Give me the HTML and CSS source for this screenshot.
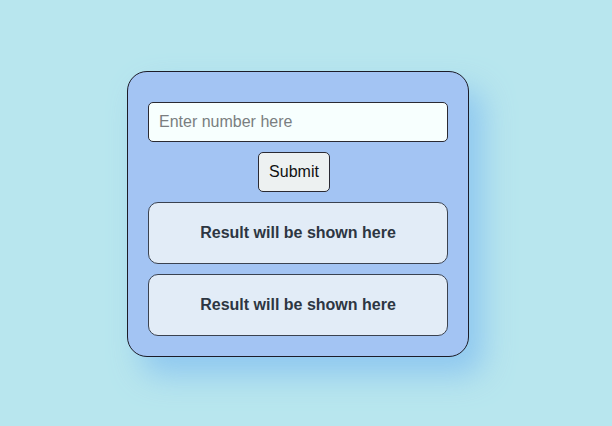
FILE: index.html
```html
<!DOCTYPE html>
<html>
<head>
<meta charset="utf-8">
<link rel="stylesheet" href="styles.css">
</head>
<body>
<div class="page">
  <div class="card">
    <input class="num-input" type="text" placeholder="Enter number here">
    <button class="submit-btn">Submit</button>
    <div class="result">Result will be shown here</div>
    <div class="result">Result will be shown here</div>
  </div>
</div>
</body>
</html>
```
FILE: styles.css
```css
html, body {
  margin: 0;
  padding: 0;
  background: #b8e6ee;
  font-family: "Liberation Sans", Arial, sans-serif;
}
.page {
  height: 426px;
  display: flex;
  justify-content: center;
  align-items: center;
  padding-right: 16px;
  padding-top: 2px;
  box-sizing: border-box;
}
.card {
  width: 342px;
  box-sizing: border-box;
  background: #a3c4f3;
  border: 1px solid #1c1c28;
  border-radius: 20px;
  padding: 30px 20px 20px;
  display: flex;
  flex-direction: column;
  align-items: center;
  gap: 10px;
  box-shadow: 14px 18px 30px rgba(130, 190, 240, 0.75);
}
.num-input {
  width: 100%;
  box-sizing: border-box;
  height: 40px;
  padding: 10px;
  font-size: 16px;
  font-family: inherit;
  background: #f7fffe;
  border: 1px solid #2a2a33;
  border-radius: 5px;
  outline: none;
}
.num-input::placeholder {
  color: #7a7e80;
}
.submit-btn {
  height: 40px;
  padding: 0 10px;
  margin-right: 8px;
  font-size: 16px;
  font-family: inherit;
  background: #edf1f1;
  color: #111;
  border: 1px solid #2a2a33;
  border-radius: 5px;
}
.result {
  width: 100%;
  box-sizing: border-box;
  height: 62px;
  padding: 20px;
  line-height: 20px;
  text-align: center;
  font-weight: bold;
  font-size: 16px;
  color: #2d3642;
  background: #e2ecf7;
  border: 1px solid #3a4250;
  border-radius: 10px;
}
```
